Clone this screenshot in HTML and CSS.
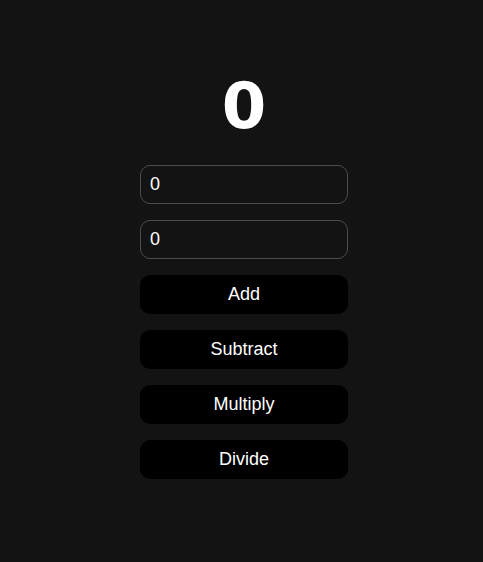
FILE: index.html
```html
<!DOCTYPE html>
<html>
<head>
<meta charset="utf-8">
<link rel="stylesheet" href="styles.css">
</head>
<body>
<main class="calc">
  <h1 class="result">0</h1>
  <div class="controls">
    <input class="field" type="text" value="0">
    <input class="field" type="text" value="0">
    <button class="btn">Add</button>
    <button class="btn">Subtract</button>
    <button class="btn">Multiply</button>
    <button class="btn">Divide</button>
  </div>
</main>
</body>
</html>
```

FILE: styles.css
```css
html, body {
  margin: 0;
  background: #131313;
  height: 100%;
}
body {
  font-family: "Liberation Sans", Arial, sans-serif;
  color: #fff;
}
.calc {
  display: flex;
  flex-direction: column;
  align-items: center;
  padding-top: 70px;
  padding-left: 5px;
}
.result {
  margin: 0 0 23px;
  font-family: "DejaVu Sans", sans-serif;
  font-size: 64px;
  line-height: 72px;
  font-weight: bold;
}
.controls {
  display: flex;
  flex-direction: column;
  gap: 16px;
  width: 208px;
}
.field {
  box-sizing: border-box;
  width: 100%;
  height: 39px;
  padding: 0 9px;
  border: 1px solid #4d4d4d;
  border-radius: 10px;
  background: #131313;
  color: #fff;
  font-family: "Liberation Sans", Arial, sans-serif;
  font-size: 18px;
  outline: none;
}
.btn {
  box-sizing: border-box;
  width: 100%;
  height: 39px;
  border: none;
  border-radius: 10px;
  background: #000;
  color: #fff;
  font-family: "Liberation Sans", Arial, sans-serif;
  font-size: 18px;
  cursor: pointer;
}
```
